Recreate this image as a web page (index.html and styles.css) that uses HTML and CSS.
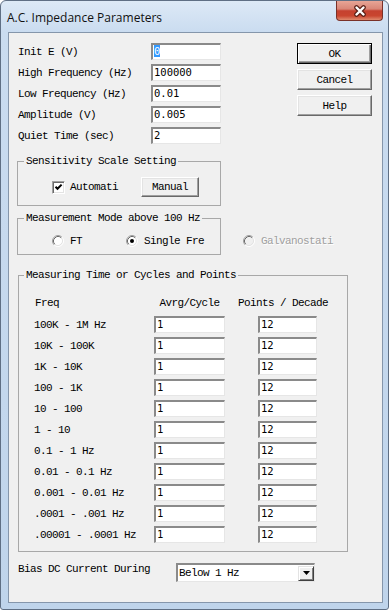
FILE: index.html
```html
<!DOCTYPE html>
<html>
<head>
<meta charset="utf-8">
<title>A.C. Impedance Parameters</title>
<link rel="stylesheet" href="styles.css">
</head>
<body>
<div class="window">
  <div class="titlebar">
    <span class="title">A.C. Impedance Parameters</span>
    <div class="close">
      <svg width="14" height="12" viewBox="0 0 14 12"><path d="M3.5 2.5L10.5 9.5M10.5 2.5L3.5 9.5" stroke="#5a1f16" stroke-width="4.6" stroke-linecap="round"/><path d="M3.5 2.5L10.5 9.5M10.5 2.5L3.5 9.5" stroke="#fff" stroke-width="2.4" stroke-linecap="round"/></svg>
    </div>
  </div>
  <div class="client">
    <div class="top">
      <div class="fields">
        <span class="lbl">Init E (V)</span><div class="edit"><span class="hl">0</span></div>
        <span class="lbl">High Frequency (Hz)</span><div class="edit">100000</div>
        <span class="lbl">Low Frequency (Hz)</span><div class="edit">0.01</div>
        <span class="lbl">Amplitude (V)</span><div class="edit">0.005</div>
        <span class="lbl">Quiet Time (sec)</span><div class="edit">2</div>
      </div>
      <div class="buttons">
        <div class="btn default">OK</div>
        <div class="btn">Cancel</div>
        <div class="btn">Help</div>
      </div>
    </div>

    <fieldset class="group sens">
      <legend>Sensitivity Scale Setting</legend>
      <div class="sens-body">
        <span class="check"><svg width="11" height="11" viewBox="0 0 11 11"><path d="M2.5 4.8L4.5 6.8L8.6 2.6" stroke="#000" stroke-width="2" fill="none"/></svg></span>
        <span class="txt auto-label">Automati</span>
        <div class="btn manual">Manual</div>
      </div>
    </fieldset>

    <div class="mode-row">
      <fieldset class="group mode">
        <legend>Measurement Mode above 100 Hz</legend>
        <div class="mode-body">
          <div class="radio">
            <svg class="rb" width="12" height="12" viewBox="0 0 12 12"><circle cx="6" cy="6" r="4.5" fill="#fff"/><path d="M2.11 9.89A5.5 5.5 0 0 1 9.89 2.11" stroke="#a0a0a0" fill="none"/><path d="M9.89 2.11A5.5 5.5 0 0 1 2.11 9.89" stroke="#fff" fill="none"/><path d="M2.82 9.18A4.5 4.5 0 0 1 9.18 2.82" stroke="#696969" fill="none"/><path d="M9.18 2.82A4.5 4.5 0 0 1 2.82 9.18" stroke="#e3e3e3" fill="none"/></svg>
            <span>FT</span>
          </div>
          <div class="radio single">
            <svg class="rb" width="12" height="12" viewBox="0 0 12 12"><circle cx="6" cy="6" r="4.5" fill="#fff"/><path d="M2.11 9.89A5.5 5.5 0 0 1 9.89 2.11" stroke="#a0a0a0" fill="none"/><path d="M9.89 2.11A5.5 5.5 0 0 1 2.11 9.89" stroke="#fff" fill="none"/><path d="M2.82 9.18A4.5 4.5 0 0 1 9.18 2.82" stroke="#696969" fill="none"/><path d="M9.18 2.82A4.5 4.5 0 0 1 2.82 9.18" stroke="#e3e3e3" fill="none"/><circle cx="6" cy="6" r="2" fill="#000"/></svg>
            <span class="txt">Single Fre</span>
          </div>
        </div>
      </fieldset>
      <div class="radio galv">
        <svg class="rb" width="12" height="12" viewBox="0 0 12 12"><circle cx="6" cy="6" r="4.5" fill="#f0f0f0"/><path d="M2.11 9.89A5.5 5.5 0 0 1 9.89 2.11" stroke="#a0a0a0" fill="none"/><path d="M9.89 2.11A5.5 5.5 0 0 1 2.11 9.89" stroke="#fff" fill="none"/><path d="M2.82 9.18A4.5 4.5 0 0 1 9.18 2.82" stroke="#696969" fill="none"/><path d="M9.18 2.82A4.5 4.5 0 0 1 2.82 9.18" stroke="#e3e3e3" fill="none"/></svg>
        <span class="txt galv-label">Galvanostati</span>
      </div>
    </div>

    <fieldset class="group measuring">
      <legend>Measuring Time or Cycles and Points</legend>
      <div class="table">
        <span class="lbl hdr-freq">Freq</span><span class="lbl hdr">Avrg/Cycle</span><span class="lbl hdr hdr-pts">Points / Decade</span>
        <span class="lbl">100K - 1M Hz</span><div class="edit">1</div><div class="edit">12</div>
        <span class="lbl">10K - 100K</span><div class="edit">1</div><div class="edit">12</div>
        <span class="lbl">1K - 10K</span><div class="edit">1</div><div class="edit">12</div>
        <span class="lbl">100 - 1K</span><div class="edit">1</div><div class="edit">12</div>
        <span class="lbl">10 - 100</span><div class="edit">1</div><div class="edit">12</div>
        <span class="lbl">1 - 10</span><div class="edit">1</div><div class="edit">12</div>
        <span class="lbl">0.1 - 1 Hz</span><div class="edit">1</div><div class="edit">12</div>
        <span class="lbl">0.01 - 0.1 Hz</span><div class="edit">1</div><div class="edit">12</div>
        <span class="lbl">0.001 - 0.01 Hz</span><div class="edit">1</div><div class="edit">12</div>
        <span class="lbl">.0001 - .001 Hz</span><div class="edit">1</div><div class="edit">12</div>
        <span class="lbl">.00001 - .0001 Hz</span><div class="edit">1</div><div class="edit">12</div>
      </div>
    </fieldset>

    <div class="bias">
      <span class="lbl bias-label">Bias DC Current During</span>
      <div class="combo">
        <span class="lbl combo-text">Below 1 Hz</span>
        <div class="drop"><svg width="7" height="4" viewBox="0 0 7 4"><path d="M0 0H7L3.5 4Z" fill="#000"/></svg></div>
      </div>
    </div>
  </div>
</div>
</body>
</html>
```

FILE: styles.css
```css
* { box-sizing: border-box; }

body {
  margin: 0;
  background: #fff;
}

.window {
  width: 389px;
  height: 610px;
  border: 1px solid #5f6f84;
  border-radius: 6px 6px 3px 3px;
  background: linear-gradient(180deg, #dde9f6 0, #cadcf0 31px, #bfd4eb 100%);
  padding: 0 5px 6px 7px;
  display: flex;
  flex-direction: column;
}

.titlebar {
  height: 31px;
  display: flex;
  justify-content: space-between;
  align-items: flex-start;
}

.title {
  font-family: "Open Sans", "Noto Sans", sans-serif;
  font-size: 12px;
  line-height: 17px;
  margin: 8px 0 0 -1px;
  color: #111;
}

.close {
  width: 47px;
  height: 20px;
  border: 1px solid #7a3128;
  border-top: none;
  border-radius: 0 0 4px 4px;
  background: linear-gradient(180deg, #e8a596 0%, #d98677 42%, #c5412f 52%, #c9452f 78%, #df8a6e 100%);
  display: flex;
  align-items: center;
  justify-content: center;
}

.client {
  height: 571px;
  border: 1px solid #8596ab;
  background: #f0f0f0;
  padding: 10px 10px 0 8px;
}

.lbl,
.txt {
  font-family: "Liberation Mono", "DejaVu Sans Mono", monospace;
  font-size: 11px;
  letter-spacing: -0.6px;
  line-height: 12px;
  color: #000;
  white-space: nowrap;
}

.edit {
  background: #fff;
  height: 17px;
  border-style: solid;
  border-width: 2px 1px 1px 2px;
  border-color: #8a8a8a #e6e6e6 #e6e6e6 #8a8a8a;
  font-family: "DejaVu Sans Mono", monospace;
  font-size: 10.5px;
  line-height: 13px;
  padding-left: 1px;
  color: #000;
  white-space: nowrap;
}

.hl {
  background: #3399ff;
  color: #fff;
}

.top {
  display: flex;
  align-items: flex-start;
}

.fields {
  margin-left: 1px;
  display: grid;
  grid-template-columns: 133px 70px;
  grid-auto-rows: 17px;
  row-gap: 4px;
  align-items: center;
}

.buttons {
  margin-left: auto;
  display: flex;
  flex-direction: column;
  gap: 5px;
}

.btn {
  width: 75px;
  height: 21px;
  background: #f0f0f0;
  border: 1px solid;
  border-color: #fff #696969 #696969 #fff;
  box-shadow: inset -1px -1px #a0a0a0, inset 1px 1px #e3e3e3;
  font-family: "Liberation Mono", "DejaVu Sans Mono", monospace;
  font-size: 11px;
  letter-spacing: -0.6px;
  display: flex;
  align-items: center;
  justify-content: center;
  color: #000;
}

.btn.default {
  border-color: #000;
  box-shadow: inset 1px 1px #fff, inset -1px -1px #696969, inset -2px -2px #a0a0a0;
}

.group {
  margin: 0;
  padding: 0;
  border: 1px solid #a8a8a8;
  min-width: 0;
}

.group legend {
  padding: 0 2px;
  margin-left: 6px;
  font-family: "Liberation Mono", "DejaVu Sans Mono", monospace;
  font-size: 11px;
  letter-spacing: -0.6px;
  line-height: 12px;
  white-space: nowrap;
}

.sens {
  width: 204px;
  margin-top: 11px;
}

.sens-body {
  display: flex;
  align-items: center;
  padding: 10px 0 8px 34px;
}

.check {
  width: 13px;
  height: 13px;
  background: #fff;
  border: 1px solid;
  border-color: #a0a0a0 #fff #fff #a0a0a0;
  box-shadow: inset 1px 1px #696969, inset -1px -1px #e3e3e3;
  display: flex;
  flex: none;
}

.auto-label {
  width: 48px;
  margin-left: 5px;
}

.btn.manual {
  width: 58px;
  height: 20px;
  margin-left: 23px;
}

.mode-row {
  display: flex;
  margin-top: 6px;
}

.mode {
  width: 204px;
}

.mode-body {
  display: flex;
  align-items: center;
  height: 30px;
  padding: 10px 0 7px 34px;
}

.radio {
  display: flex;
  align-items: center;
  gap: 6px;
  font-family: "Liberation Mono", "DejaVu Sans Mono", monospace;
  font-size: 11px;
  letter-spacing: -0.6px;
  line-height: 12px;
}

.rb {
  flex: none;
}

.single {
  margin-left: 44px;
}

.galv {
  align-self: flex-end;
  margin: 0 0 8px 22px;
}

.galv-label {
  color: #a0a0a0;
  text-shadow: 1px 1px 0 #fff;
}

.measuring {
  width: 330px;
  margin: 14px 0 0 1px;
}

.measuring legend {
  margin-left: 5px;
}

.table {
  display: grid;
  grid-template-columns: 87px 71px 59px;
  column-gap: 33px;
  grid-template-rows: 22px repeat(11, 21px);
  align-items: center;
  padding: 11px 0 6px 15px;
}

.hdr-freq {
  padding-left: 1px;
}

.hdr {
  justify-self: center;
}

.hdr-pts {
  margin-left: -9px;
}

.bias {
  display: flex;
  align-items: flex-start;
  margin: 11px 0 0 1px;
}

.bias-label {
  width: 158px;
}

.combo {
  width: 139px;
  height: 19px;
  background: #fff;
  border-style: solid;
  border-width: 2px 1px 1px 2px;
  border-color: #8a8a8a #e6e6e6 #e6e6e6 #8a8a8a;
  display: flex;
  align-items: center;
}

.combo-text {
  padding-left: 1px;
}

.drop {
  margin-left: auto;
  width: 16px;
  height: 15px;
  background: #f0f0f0;
  border: 1px solid;
  border-color: #e3e3e3 #404040 #404040 #e3e3e3;
  box-shadow: inset 1px 1px #fff, inset -1px -1px #808080;
  display: flex;
  align-items: center;
  justify-content: center;
}
```
